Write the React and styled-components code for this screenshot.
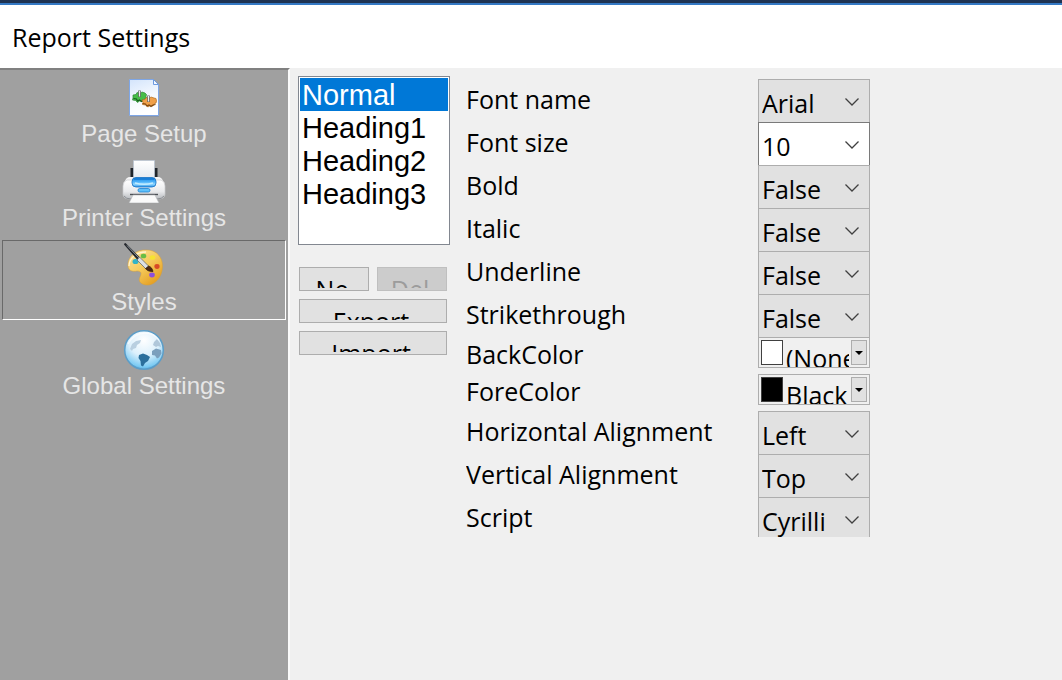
import React, { useState } from "react";
import styled, { createGlobalStyle } from "styled-components";

const GlobalStyle = createGlobalStyle`
  *, *::before, *::after { box-sizing: border-box; }
  html, body { margin: 0; background: #f0f0f0; }
  button, select { margin: 0; border-radius: 0; font: inherit; color: inherit; }
`;

const ui = `"Open Sans", "Noto Sans", sans-serif`;
const arial = `"Liberation Sans", Arial, sans-serif`;

const Page = styled.div`
  display: flex;
  flex-direction: column;
  min-height: 100vh;
  font-family: ${ui};
  font-size: 25px;
  color: #000;
`;

const Header = styled.header`
  height: 68px;
  padding: 0 12px;
  border-top: 3px solid #1f3352;
  box-shadow: inset 0 2px 0 #3579c4;
  background: #fff;
`;

const Title = styled.h1`
  margin: 0;
  font-size: 25px;
  font-weight: 400;
  line-height: 68px;
`;

const Body = styled.div`
  display: flex;
  flex: 1;
`;

const Sidebar = styled.nav`
  display: flex;
  flex-direction: column;
  gap: 4px;
  flex: 0 0 290px;
  padding: 2px 2px 0;
  border-top: 2px solid #808080;
  border-right: 2px solid #fafafa;
  background: #a0a0a0;
`;

const NavItem = styled.button`
  display: flex;
  flex-direction: column;
  align-items: center;
  height: 80px;
  padding: 2px 0 0;
  border: 1px solid;
  border-color: ${(p) => (p.$active ? "#696969 #fff #fff #696969" : "transparent")};
  background: none;
  font-family: ${arial};
  font-size: 24px;
  line-height: 30px;
  color: #e6e6e6;

  svg { display: block; width: 48px; height: 44px; }
`;

const Content = styled.main`
  display: flex;
  flex: 1;
  align-items: flex-start;
  gap: 16px;
  padding: 8px;
`;

const StylePane = styled.section`
  display: flex;
  flex-direction: column;
  gap: 22px;
  flex: 0 0 152px;
`;

const StyleList = styled.select`
  width: 100%;
  height: 169px;
  padding: 1px;
  border: 1px solid #828790;
  outline: none;
  background: #fff;
  font-family: ${arial};
  font-size: 29px;
  overflow: hidden;

  option {
    height: 33px;
    min-height: 33px;
    padding: 1px 2px 0;
    line-height: 33px;
    color: #000;
  }
  option:checked {
    background: #0078d7 linear-gradient(#0078d7, #0078d7);
    color: #fff !important;
    -webkit-text-fill-color: #fff;
  }
`;

const Actions = styled.div`
  display: grid;
  grid-template-columns: 1fr 1fr;
  gap: 8px;
  padding: 0 3px 0 1px;
`;

const Action = styled.button`
  display: flex;
  justify-content: center;
  align-items: flex-start;
  grid-column: ${(p) => (p.$wide ? "1 / -1" : "auto")};
  height: 24px;
  padding: 4px 8px 2px 4px;
  border: 1px solid ${(p) => (p.disabled ? "#bfbfbf" : "#adadad")};
  background: ${(p) => (p.disabled ? "#cccccc" : "#e1e1e1")};
  color: ${(p) => (p.disabled ? "#9c9c9c" : "#000")};
`;

const Caption = styled.span`
  height: 16px;
  line-height: 34px;
  overflow: hidden;
`;

const Form = styled.form`
  flex: 1;
  height: 461px;
  padding-top: 3px;
  overflow: hidden;
`;

const Row = styled.div`
  display: grid;
  grid-template-columns: 292px 112px;
  align-items: start;
  height: ${(p) => (p.$short ? 37 : 43)}px;
  line-height: ${(p) => (p.$short ? 34 : 40)}px;
`;

const Combo = styled.div`
  display: grid;
  grid-template-columns: 1fr 36px;
  align-items: center;
  height: 44px;
  border: 1px solid ${(p) => (p.$editable ? "#7a7a7a" : "#adadad")};
  background: ${(p) => (p.$editable ? "#fff" : "#e1e1e1")};

  select {
    grid-area: 1 / 1 / 2 / 3;
    width: 100%;
    height: 42px;
    padding: 4px 38px 0 3px;
    border: 0;
    outline: none;
    appearance: none;
    background: none;
    line-height: 36px;
  }
  svg { grid-area: 1 / 2; justify-self: center; pointer-events: none; }
`;

const ColorBox = styled.div`
  display: grid;
  grid-template-columns: 22px 1fr 16px;
  gap: 2px;
  align-items: start;
  height: 31px;
  padding: 2px;
  border: 1px solid #adadad;
  overflow: hidden;

  select {
    width: 100%;
    height: 36px;
    padding: 0 0 0 1px;
    border: 0;
    outline: none;
    appearance: none;
    background: none;
    line-height: 36px;
    text-overflow: clip;
  }
`;

const Swatch = styled.span`
  height: 25px;
  border: 1px solid #404040;
  background: ${(p) => p.$color};
`;

const Drop = styled.span`
  display: grid;
  place-items: center;
  height: 25px;
  border: 1px solid #adadad;
  background: #e1e1e1;
`;

const Chevron = () => (
  <svg width="16" height="12" viewBox="0 0 16 12" fill="none" stroke="#404040" strokeWidth="1.3">
    <path d="M2.500 3.500 9 10l6.500-6.500" />
  </svg>
);

const PageIcon = () => (
  <svg viewBox="0 0 48 44">
    <defs>
      <linearGradient id="paper" x1="0" y1="0" x2="0.300" y2="1">
        <stop offset="0" stopColor="#d3e4fb" />
        <stop offset="0.600" stopColor="#f5f9ff" />
        <stop offset="1" stopColor="#fff" />
      </linearGradient>
    </defs>
    <path d="M9.500 4.500h24l5 5v31h-29z" fill="url(#paper)" stroke="#7ea6e6" />
    <path d="M33.500 4.500v5h5z" fill="#f4f8ff" stroke="#6c9ae0" />
    <path d="M10 41.500h29" stroke="#7f8fa8" opacity="0.600" />
    <path
      d="M13 20l3-.5 1-2 3 1 2-1.500 3 1 1.500 1.500-.5 2 .5 2-3 1-1 2-3-.5-2 1.500-2-2-3-.5.500-2z"
      fill="#46bd48" stroke="#2f8a35" strokeWidth="0.700"
    />
    <path d="M13.500 23.500l3 .5 1 2 2-1 2 1.500 1.500-1.500" fill="none" stroke="#185c1d" strokeWidth="1.100" />
    <path
      d="M22 25l3-.5 1-2 3 1 2-1.500 3 1 2 .5.500 2.500-.5 2-2 1-1 2-3-.5-2 1.500-2.500-2-3-.5.500-2z"
      fill="#f0a04a" stroke="#b06c1e" strokeWidth="0.700"
    />
    <path d="M22.500 28.500l3 .5 1.500 2 2-1 2 1.500 2-1.500 2.500-.5" fill="none" stroke="#7f460c" strokeWidth="1.100" />
    <path d="M19.500 15.500v6.500M28.500 20.500v6.500" stroke="#666" strokeWidth="2.600" />
    <path d="M19.500 16v5.500M28.500 21v5.500" stroke="#eee" strokeWidth="1.100" />
  </svg>
);

const PrinterIcon = () => (
  <svg viewBox="0 0 48 44">
    <defs>
      <linearGradient id="shell" x1="0" y1="0" x2="0" y2="1">
        <stop offset="0" stopColor="#fff" />
        <stop offset="0.600" stopColor="#e9eaec" />
        <stop offset="1" stopColor="#b9bcc0" />
      </linearGradient>
      <linearGradient id="sheet" x1="0" y1="0" x2="0" y2="1">
        <stop offset="0" stopColor="#fff" />
        <stop offset="1" stopColor="#e4e8ee" />
      </linearGradient>
      <linearGradient id="glass" x1="0" y1="0" x2="0" y2="1">
        <stop offset="0" stopColor="#1583dd" />
        <stop offset="0.450" stopColor="#4cb2fa" />
        <stop offset="0.700" stopColor="#8fd7ff" />
        <stop offset="1" stopColor="#2c94e8" />
      </linearGradient>
    </defs>
    <path d="M10.500 9h4v12h-4zM33.500 9h4v12h-4z" fill="#20252b" />
    <rect x="5" y="18" width="38" height="12" rx="5" fill="#f5f5f6" />
    <path
      d="M7 21q-4 1-4 6v8q0 5 7 5h28q7 0 7-5v-8q0-5-4-6z"
      fill="url(#shell)" stroke="#c8cacd" strokeWidth="0.700"
    />
    <path d="M4 37q2 3 7 3h26q5 0 7-3" fill="none" stroke="#73777c" opacity="0.700" />
    <path d="M13.500 1.500h21V21h-21z" fill="url(#sheet)" stroke="#b9c4d2" strokeWidth="0.700" />
    <rect x="12" y="18.500" width="24" height="9.500" rx="4" fill="url(#glass)" stroke="#1872c4" strokeWidth="0.800" />
    <path d="M14 20h20" stroke="#1677d0" strokeWidth="1.500" />
    <path d="M15 24q9 2.500 18 0" stroke="#c3ecff" strokeWidth="1.500" fill="none" />
    <rect x="18" y="29.500" width="12" height="3.500" rx="1.700" fill="#5fc1fb" stroke="#1a80d2" strokeWidth="0.800" />
    <path d="M10 35.500h28" stroke="#4d5156" strokeWidth="1.400" />
    <path d="M13 36h22l4 8H9z" fill="#fafafa" stroke="#b0b3b7" strokeWidth="0.600" />
  </svg>
);

const PaletteIcon = () => (
  <svg viewBox="0 0 48 44">
    <defs>
      <linearGradient id="wood" x1="0" y1="0" x2="0.800" y2="1">
        <stop offset="0" stopColor="#fbe3a4" />
        <stop offset="0.500" stopColor="#f6cc5d" />
        <stop offset="1" stopColor="#e39a1c" />
      </linearGradient>
    </defs>
    <path
      d="M8 23C7 14 16 6 27 7c10 0 16 8 15.500 17C42 35 34 43 26 42c-6-1-8-4-6-8s1-6-3-6c-4 1-8.500 0-9-5z"
      fill="url(#wood)" stroke="#d99f35" strokeWidth="0.500"
    />
    <path d="M9 23c0-7 7-14 17-14" fill="none" stroke="#fff3cf" strokeWidth="1.300" />
    <ellipse cx="15.500" cy="18.500" rx="3" ry="2.600" fill="#31b4c8" />
    <ellipse cx="23.500" cy="13" rx="2.800" ry="2.300" fill="#69bd45" />
    <ellipse cx="32.500" cy="14.500" rx="2.800" ry="2.300" fill="#f6e332" />
    <ellipse cx="37" cy="23.500" rx="2.600" ry="2.400" fill="#d84a26" />
    <ellipse cx="32" cy="32" rx="2.800" ry="2.400" fill="#8c4fdc" />
    <path d="M5.500 0 20 14.500 17.500 17 4 1.500Q4 0 5.500 0z" fill="#25282d" />
    <path d="M7 2.500 19 15" stroke="#8f969e" strokeWidth="1" />
    <path d="M19.500 14 29 23.500l-3 2.500-9-9z" fill="#dce0e5" stroke="#595e66" strokeWidth="0.700" />
    <path d="M28.500 23c3 1 4 3 4.500 5.500-3 0-6-.5-7.500-3z" fill="#4a2814" stroke="#241309" strokeWidth="0.600" />
  </svg>
);

const GlobeIcon = () => (
  <svg viewBox="0 0 48 44">
    <defs>
      <radialGradient id="ocean" cx="0.500" cy="0.250" r="0.800">
        <stop offset="0" stopColor="#fff" />
        <stop offset="0.500" stopColor="#dcf0fc" />
        <stop offset="0.850" stopColor="#7ccbf3" />
        <stop offset="1" stopColor="#3c9cd6" />
      </radialGradient>
    </defs>
    <circle cx="24" cy="23" r="19.300" fill="url(#ocean)" stroke="#5b9dc8" strokeWidth="1.500" />
    <path d="M10 22l2-5 4-3 5-1-1 3-3 2-1 3-3 1-1 2z" fill="#b9cfe0" />
    <path d="M34 15l3-3 3 4 1 4-3-1-2 1-3-2z" fill="#b0c7da" />
    <path d="M32 24l4-2.500 5 1.500.5 3.500-2.500 4-2 1-2-3-3-.5z" fill="#7b9fbd" />
    <path d="M19 28l4-1.500 4 1.500 3 2-2 4-3 2-2 3.500-2-1-.5-4.500-2-3z" fill="#2b6f9c" />
    <path d="M8 17q6-11 17-11 9 0 14 7" fill="none" stroke="#fff" strokeWidth="1.500" opacity="0.600" />
  </svg>
);

const sections = [
  ["Page Setup", PageIcon],
  ["Printer Settings", PrinterIcon],
  ["Styles", PaletteIcon],
  ["Global Settings", GlobeIcon],
];

const fields = [
  { label: "Font name", value: "Arial" },
  { label: "Font size", value: "10", editable: true },
  { label: "Bold", value: "False" },
  { label: "Italic", value: "False" },
  { label: "Underline", value: "False" },
  { label: "Strikethrough", value: "False" },
  { label: "BackColor", value: "(None)", color: "#fff" },
  { label: "ForeColor", value: "Black", color: "#000" },
  { label: "Horizontal Alignment", value: "Left" },
  { label: "Vertical Alignment", value: "Top" },
  { label: "Script", value: "Cyrilli" },
];

function Field({ label, value, editable, color }) {
  const id = label.toLowerCase().replace(/ /g, "-");
  const select = (
    <select id={id} defaultValue={value}>
      <option>{value}</option>
    </select>
  );
  return (
    <Row $short={Boolean(color)}>
      <label htmlFor={id}>{label}</label>
      {color ? (
        <ColorBox>
          <Swatch $color={color} />
          {select}
          <Drop>
            <svg width="8" height="4" viewBox="0 0 8 4"><path d="M0 0h8L4 4z" /></svg>
          </Drop>
        </ColorBox>
      ) : (
        <Combo $editable={editable}>
          {select}
          <Chevron />
        </Combo>
      )}
    </Row>
  );
}

export default function App() {
  const [section, setSection] = useState("Styles");
  return (
    <Page>
      <GlobalStyle />
      <Header>
        <Title>Report Settings</Title>
      </Header>
      <Body>
        <Sidebar>
          {sections.map(([name, Icon]) => (
            <NavItem key={name} type="button" $active={name === section} onClick={() => setSection(name)}>
              <Icon />
              {name}
            </NavItem>
          ))}
        </Sidebar>
        <Content>
          <StylePane>
            <StyleList size={5} defaultValue="Normal" aria-label="Styles">
              {["Normal", "Heading1", "Heading2", "Heading3"].map((name) => (
                <option key={name}>{name}</option>
              ))}
            </StyleList>
            <Actions>
              <Action type="button"><Caption>Ne</Caption></Action>
              <Action type="button" disabled><Caption>Del</Caption></Action>
              <Action type="button" $wide><Caption>Export</Caption></Action>
              <Action type="button" $wide><Caption>Import</Caption></Action>
            </Actions>
          </StylePane>
          <Form>
            {fields.map((field) => <Field key={field.label} {...field} />)}
          </Form>
        </Content>
      </Body>
    </Page>
  );
}
